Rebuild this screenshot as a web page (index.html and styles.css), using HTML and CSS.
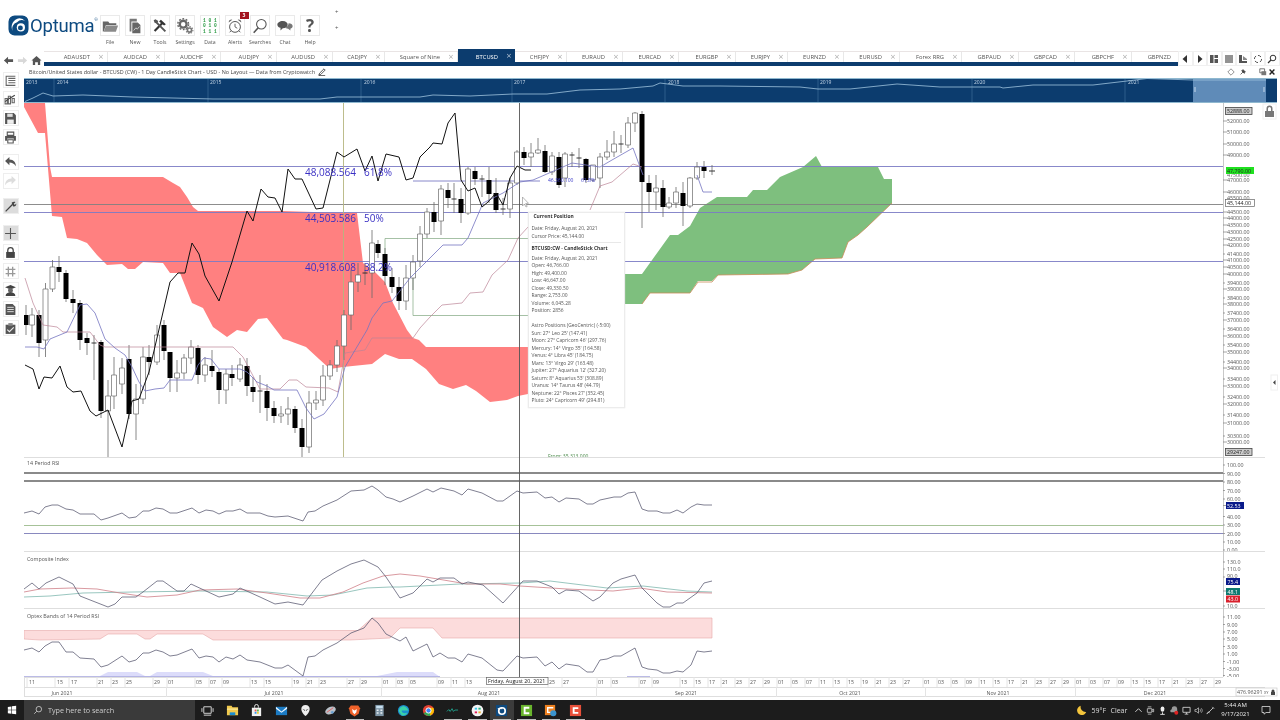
FILE: index.html
```html
<!DOCTYPE html>
<html lang="en">
<head>
<meta charset="utf-8">
<title>Optuma</title>
<link rel="stylesheet" href="styles.css">
</head>
<body>
<div class="app">
  <header class="toolbar">
    <div class="logo">
      <svg class="logo-mark" viewBox="0 0 22 22"><path d="M7 0.500h8a6.500 6.500 0 0 1 6.500 6.500v8a6.500 6.500 0 0 1-6.500 6.500h-8a6.500 6.500 0 0 1-6.500-6.500v-8a6.500 6.500 0 0 1 6.500-6.500z" fill="#0d4a80"/><path d="M5 17a9 9 0 0 1 7-13.500a8 8 0 0 1 6 3a7 7 0 0 0-8.500 1a7 7 0 0 0-4.500 9.500z" fill="#fff"/><circle cx="13.500" cy="13" r="4.300" fill="#fff"/><circle cx="13" cy="13.500" r="2.600" fill="#0d4a80"/></svg>
      <span class="logo-text">Optuma</span><span class="logo-r">®</span>
    </div>
    <div class="tools">
      <div class="tool"><div class="tool-box"><svg viewBox="0 0 20 20"><path d="M2 5h6l1.500 2H17v2H5.500L3 16H2z" fill="#666"/><path d="M5.500 9.500H19l-2.500 7H3z" fill="#8a8a8a"/></svg></div><span>File</span></div>
      <div class="tool"><div class="tool-box"><svg viewBox="0 0 20 20"><path d="M4 2h8v3H6v11H4z" fill="#777"/><path d="M7 6h6l3 3v9H7z" fill="#666"/><path d="M8.500 15l2.500-3 1.500 1.500 2.500-3" fill="none" stroke="#ddd" stroke-width=".9"/></svg></div><span>New</span></div>
      <div class="tool"><div class="tool-box"><svg viewBox="0 0 20 20"><path d="M4 15.500l9-9" stroke="#333" stroke-width="2.400"/><path d="M11 3l5.500 5-2 1.500L9 5z" fill="#333"/><path d="M16 16L6.500 6.500" stroke="#555" stroke-width="2.200"/><path d="M3 3.500l2-1 3 2-1 3-3-1z" fill="#555"/></svg></div><span>Tools</span></div>
      <div class="tool"><div class="tool-box"><svg viewBox="0 0 20 20"><circle cx="8" cy="8" r="3.800" fill="none" stroke="#666" stroke-width="2.600"/><circle cx="8" cy="8" r="6" fill="none" stroke="#666" stroke-width="1.600" stroke-dasharray="2 1.800"/><circle cx="15" cy="14.500" r="2.300" fill="none" stroke="#777" stroke-width="1.800"/><circle cx="15" cy="14.500" r="3.800" fill="none" stroke="#777" stroke-width="1.200" stroke-dasharray="1.500 1.400"/></svg></div><span>Settings</span></div>
      <div class="tool"><div class="tool-box tool-data"><span>1 0 1</span><span>0 1 0</span><span>1 1 1</span></div><span>Data</span></div>
      <div class="tool tool-alert"><div class="tool-box"><svg viewBox="0 0 20 20"><circle cx="10" cy="11" r="6" fill="none" stroke="#555" stroke-width="1.100"/><path d="M10 7.500V11l2.500 1.500M4 17l2-2M16 17l-2-2" fill="none" stroke="#555"/><path d="M3 6a3 3 0 0 1 4-3zM17 6a3 3 0 0 0-4-3z" fill="#666"/></svg></div><span>Alerts</span><b class="badge">3</b></div>
      <div class="tool"><div class="tool-box"><svg viewBox="0 0 20 20"><circle cx="11.500" cy="8" r="5.300" fill="none" stroke="#555" stroke-width="1.200"/><path d="M8 12L3 17.500" stroke="#555" stroke-width="1.800"/></svg></div><span>Searches</span></div>
      <div class="tool"><div class="tool-box"><svg viewBox="0 0 20 20"><path d="M7.500 4.500c3.500 0 5.500 2 5.500 4s-2 4-5.500 4L5 15v-3C3 11.500 1.500 10 1.500 8.500c0-2 2.500-4 6-4z" fill="#555"/><path d="M14 7c2.500 0 4.500 1.500 4.500 3S17.500 12.500 16 13v2l-2.500-2c-2 0-3-1-3-1 2-1 3.500-3 3.500-5z" fill="#777"/></svg></div><span>Chat</span></div>
      <div class="tool"><div class="tool-box tool-help">?</div><span>Help</span></div>
    </div>
    <div class="plus-col"><span>+</span><span>+</span></div>
  </header>

  <nav class="tabrow">
    <div class="nav-btns">
      <svg viewBox="0 0 12 12"><path d="M1 6l4.500-4v2.500H11v3H5.500V10z" fill="#555"/></svg>
      <svg viewBox="0 0 12 12"><path d="M11 6L6.500 2v2.500H1v3h5.500V10z" fill="#d8d8d8"/></svg>
      <svg viewBox="0 0 12 12"><path d="M6 1l5.500 5H10v5H7.500V8h-3v3H2V6H.500z" fill="#555"/></svg>
    </div>
    <div class="tabs-wrap">
      <div class="tabs">
        <div class="tab">ADAUSDT<i>×</i></div>
        <div class="tab">AUDCAD<i>×</i></div>
        <div class="tab">AUDCHF<i>×</i></div>
        <div class="tab">AUDJPY<i>×</i></div>
        <div class="tab">AUDUSD<i>×</i></div>
        <div class="tab">CADJPY<i>×</i></div>
        <div class="tab">Square of Nine<i>×</i></div>
        <div class="tab tab-on">BTCUSD<i>×</i></div>
        <div class="tab">CHFJPY<i>×</i></div>
        <div class="tab">EURAUD<i>×</i></div>
        <div class="tab">EURCAD<i>×</i></div>
        <div class="tab">EURGBP<i>×</i></div>
        <div class="tab">EURJPY<i>×</i></div>
        <div class="tab">EURNZD<i>×</i></div>
        <div class="tab">EURUSD<i>×</i></div>
        <div class="tab">Forex RRG<i>×</i></div>
        <div class="tab">GBPAUD<i>×</i></div>
        <div class="tab">GBPCAD<i>×</i></div>
        <div class="tab">GBPCHF<i>×</i></div>
        <div class="tab tab-last">GBPNZD</div>
      </div>
      <div class="tab-strip"></div>
    </div>
    <div class="tab-tools">
      <div><svg viewBox="0 0 10 10"><path d="M7 1L2.500 5 7 9z" fill="#333"/></svg></div>
      <div><svg viewBox="0 0 10 10"><path d="M3 1l4.500 4L3 9z" fill="#333"/></svg></div>
      <div><svg viewBox="0 0 10 10"><path d="M1 1h3.500v8H1zM5.500 1H9v3H5.500zM5.500 5H9v4H5.500z" fill="#555"/></svg></div>
      <div><svg viewBox="0 0 10 10"><path d="M1 2h8M1 4h8M1 6h8M1 8h8M2 1v8M4 1v8M6 1v8M8 1v8" stroke="#555" stroke-width=".8"/></svg></div>
      <div><svg viewBox="0 0 10 10"><path d="M1 1h3v6h5v2H1z" fill="#555"/><path d="M5 2l4 3v1H5z" fill="#888"/></svg></div>
      <div><svg viewBox="0 0 10 10"><circle cx="5" cy="5" r="3.600" fill="none" stroke="#555" stroke-dasharray="3.500 2"/></svg></div>
      <div><svg viewBox="0 0 10 10"><circle cx="6" cy="4" r="2.800" fill="none" stroke="#333"/><path d="M4 6L1 9" stroke="#333" stroke-width="1.300"/></svg></div>
    </div>
  </nav>

  <div class="body-row">
    <aside class="rail">
      <div class="rail-btn"><svg viewBox="0 0 12 12"><path d="M1.500 2h9M4 4h6.500M4 6h6.500M4 8h6.500M1.500 10.500h9M2 2v8.500" stroke="#666" fill="none"/></svg></div>
      <div class="rail-btn"><svg viewBox="0 0 12 12"><path d="M1 10V5h2v5zM4 10V3h2v7zM7.500 9V5h2v4z" fill="none" stroke="#666"/><path d="M1 8l4-3 5-3" stroke="#444" fill="none"/></svg></div>
      <div class="rail-btn"><svg viewBox="0 0 12 12"><path d="M1 1h8l2 2v8H1z" fill="#555"/><path d="M3 1.500h5v3H3z" fill="#ddd"/><path d="M3 7h6v4H3z" fill="#eee"/></svg></div>
      <div class="rail-btn"><svg viewBox="0 0 12 12"><path d="M3 1h6v3H3z" fill="none" stroke="#555"/><path d="M1 4.500h10v4.500H9V7H3v2H1z" fill="#555"/><path d="M3.500 8h5v3h-5z" fill="none" stroke="#555"/></svg></div>
      <div class="rail-btn rail-gap"><svg viewBox="0 0 12 12"><path d="M1 4.500L5 1v2.200c4 0 6 2.800 6 6.300C9.500 7 7.500 6 5 6v2.500z" fill="#555"/></svg></div>
      <div class="rail-btn"><svg viewBox="0 0 12 12"><path d="M11 4.500L7 1v2.200C3 3.200 1 6 1 9.500 2.500 7 4.500 6 7 6v2.500z" fill="#ddd"/></svg></div>
      <div class="rail-btn rail-on rail-gap"><svg viewBox="0 0 12 12"><path d="M1.500 10.500L8 4" stroke="#444" stroke-width="1.200"/><path d="M7 2.500c1-.8 3-1 3.500-.5L9 3.500l1 1 1.300-1.200c.3 1.200-.5 3-2.800 2.700z" fill="#444"/></svg></div>
      <div class="rail-btn rail-on rail-gap2"><svg viewBox="0 0 12 12"><path d="M6 1v10M1 6h10" stroke="#555"/></svg></div>
      <div class="rail-btn"><svg viewBox="0 0 12 12"><path d="M3.500 5.500V4a2.500 2.500 0 0 1 5 0v1.500" fill="none" stroke="#444" stroke-width="1.200"/><path d="M2 5.500h8V11H2z" fill="#444"/></svg></div>
      <div class="rail-btn"><svg viewBox="0 0 12 12"><path d="M4 1.500v9M8 1.500v9M1.500 4h9M1.500 8h9" stroke="#999" stroke-width="1.200"/></svg></div>
      <div class="rail-btn"><svg viewBox="0 0 12 12"><path d="M1 3l5-2 5 2-5 2z" fill="#444"/><circle cx="6" cy="6" r="2.300" fill="#666"/><path d="M1.500 11c0-2.500 2-3.500 4.500-3.500s4.500 1 4.500 3.500z" fill="#444"/></svg></div>
      <div class="rail-btn"><svg viewBox="0 0 12 12"><path d="M1.500 1h6.500l2.500 2.500V11h-9z" fill="#555"/><path d="M3 4h6M3 6h6M3 8h6" stroke="#eee" stroke-width=".8"/></svg></div>
      <div class="rail-btn"><svg viewBox="0 0 12 12"><path d="M1.500 2.500h9V11h-9z" fill="#555"/><path d="M4 1h4v2.500H4z" fill="#888"/><path d="M3 7l2 2 4-4" stroke="#eee" fill="none"/></svg></div>
    </aside>

    <main class="workspace">
      <div class="title-row">
        <span>Bitcoin/United States dollar - BTCUSD (CW) - 1 Day CandleStick Chart - USD - No Layout — Data from Cryptowatch</span>
        <svg class="pencil" viewBox="0 0 10 10"><path d="M1 9l1-2.500L7.500 1l1.500 1.500L3.500 8zM1 9.500h8" fill="none" stroke="#333"/></svg>
        <div class="title-icons">
          <svg viewBox="0 0 10 10"><path d="M5 1l4 4-4 4-4-4z" fill="none" stroke="#777"/></svg>
          <svg viewBox="0 0 10 10"><path d="M2 8l3-3M3 3l4 4M5 2l3 3-2 1-2-2z" stroke="#444" fill="#444"/></svg>
          <span class="gap"></span>
          <svg viewBox="0 0 10 10"><path d="M1 1h6v5H1z" fill="none" stroke="#555"/><path d="M3 4h6v5H3z" fill="#777"/></svg>
          <svg viewBox="0 0 10 10"><path d="M2 2l6 6M8 2L2 8" stroke="#222" stroke-width="1.800"/></svg>
        </div>
      </div>

      <svg class="overview" viewBox="24 78 1256 25">
        <rect x="24" y="78" width="1253" height="25" fill="#0c3c6e"/>
        <rect x="1193" y="79" width="73" height="24" fill="#5f8bb8"/>
        <path d="M54 78v25M208 78v25M361 78v25M512 78v25M665 78v25M818 78v25M972 78v25M1125 78v25" stroke="#3e6a98" stroke-width=".7"/>
        <path d="M24 78.500H1277M24 102.500H1277" stroke="#8fb8cf" stroke-width="1"/>
        <g class="yr"><text x="26" y="84">2013</text><text x="57" y="84">2014</text><text x="210" y="84">2015</text><text x="364" y="84">2016</text><text x="514" y="84">2017</text><text x="668" y="84">2018</text><text x="820" y="84">2019</text><text x="974" y="84">2020</text><text x="1128" y="84">2021</text></g>
        <polyline class="ovl" points="25,101.500 33,98 43,93 53,96 83,95 133,97 213,99 300,99 320,99 337,97 357,97 420,97 433,95 470,96 513,94 547,94 580,90 620,89 653,86 660,83 683,86 720,86 800,87 818,89 850,89 897,84 940,87 1000,87 1003,88 1033,85 1093,85 1127,81 1147,78.500 1193,80 1266,80"/>
        <path d="M1195 87v5M1264 87v5" stroke="#a5c0da" stroke-width="1.500"/>
      </svg>

      <section class="pane pane-main">
        <svg viewBox="24 103 1256 354">
          <path class="cloud-red" d="M24 103H45L50 167L52 177H163L173 183L180 187L187 197L193 207L198 211H283L343 213H357L363 263L373 270L385 282L393 303L407 330L413 338L419 340L426 347H528V394L518 396L507 400L490 402L476 391L466 385L453 389L439 384L426 369L412 359H399L385 354L372 364L343 367L330 369L319 359L306 347L287 340L283 339L267 318L258 319L247 332L237 330L227 337L213 327L203 308L192 303L180 273L170 273L163 263L143 262L135 269H128L122 264L107 265L97 255L87 243L77 239L67 238L62 217L52 216L45 133H38L24 107Z"/>
          <path class="cloud-green" d="M625 274H642L670 235H678L690 226L700 208L717 197H747L753 190H767L780 177L803 167L816 156L822 167H878L884 179H892V203L867 227L858 235L848 242L842 258L815 259L802 270L788 274L718 275L712 281H698L690 293H650L642 304H625Z"/>
          <path class="cloud-edge" d="M642 304L650 293H690L698 282H712L718 275L788 274L802 270L815 259L842 258L848 242L858 235L867 227L892 203"/>

          <path class="fib" d="M24 166.500H1224M24 212.500H1224M24 261.500H1224M413 181H540"/>
          <path class="level" d="M24 204.500H1224"/>
          <path class="grn" d="M385 254V238.500H528M413 278V315.500H528"/>
          <path class="vline-o" d="M343.500 103V457"/>

          <path class="wick" d="M26 305V335M32 308V337M39 310V357M45.500 283V357M52.500 260V292M59 256V282M66 270V302M73 290V313M80 300V350M87 333V355M94 335V380M101 340V418M108 380V457M114 357V409M122 358V394M129 345V419M136 384V440M143 347V404M149 345V375M157 325V365M164 320V360M170 352V392M177 360V392M184 354V379M191 340V364M198 345V384M205 357V382M212 350V377M219 369V404M226 369V404M232 365V386M240 358V382M247 358V396M253 377V402M260 375V413M267 384V421M274 401V423M281 406V423M288 397V425M295 406V433M302 419V457M309 391V453M316 391V410M323 365V406M330 360V380M337 340V372M344 310V360M351 270V330M358 263V292M365 263V285M372 230V298M378 240V258M385 248V285M392 268V293M399 277V310M406 265V310M413 255V290M420 226V267M427 208V238M434 202V232M441 185V235M448 183V208M454 183V213M461 188V223M468 167V215M475 167V185M482 175V197M489 167V203M496 178V213M503 198V215M510 178V218M517 150V185M524 147V165M531 143V167M538 138V154M545 145V173M552 152V175M559 152V188M565 152V187M572 152V167M579 148V168M586 158V183M593 165V182M600 153V188M607 140V160M614 131V157M621 135V153M628 117V148M635 112V132M642 111V228M649 175V212M656 175V210M663 180V217M669 197V209M676 187V208M683 182V226M690 177V208M697 162V180M704 161V178M712 165V175"/>
          <path class="body-w" d="M29.500 315h5V325h-5zM43 289h5V340h-5zM50 267h5V289h-5zM105.500 396h5V411h-5zM111.500 375h5V396h-5zM119.500 368h5V384h-5zM133.500 399h5V414h-5zM140.500 357h5V399h-5zM154.500 335h5V362h-5zM174.500 373h5V378h-5zM181.500 358h5V373h-5zM188.500 347h5V358h-5zM202.500 365h5V375h-5zM223.500 374h5V390h-5zM237.500 365h5V379h-5zM278.500 414h5V416h-5zM285.500 409h5V414h-5zM306.500 403h5V447h-5zM313.500 400h5V403h-5zM320.500 376h5V400h-5zM327.500 365h5V376h-5zM334.500 346h5V365h-5zM341.500 315h5V346h-5zM348.500 282h5V315h-5zM355.500 275h5V282h-5zM369.500 243h5V273h-5zM403.500 278h5V301h-5zM410.500 262h5V278h-5zM417.500 234h5V261h-5zM424.500 212h5V234h-5zM438.500 189h5V221h-5zM465.500 169h5V213h-5zM507.500 183h5V209h-5zM514.500 152h5V183h-5zM528.500 153h5V157h-5zM535.500 150h5V153h-5zM549.500 156h5V172h-5zM562.500 154h5V178h-5zM590.500 165h5V180h-5zM597.500 157h5V178h-5zM604.500 152h5V157h-5zM611.500 144h5V152h-5zM625.500 123h5V145h-5zM632.500 113h5V123h-5zM653.500 188h5V192h-5zM666.500 203h5V207h-5zM673.500 192h5V203h-5zM687.500 178h5V206h-5zM694.500 167h5V178h-5z"/>
          <path class="body-b" d="M24 315h4.500V325H24zM36.500 315h5V343h-5zM56.500 267h5V272h-5zM63.500 273h5V299h-5zM70.500 299h5V303h-5zM77.500 303h5V340h-5zM84.500 338h5V343h-5zM98.500 342h5V411h-5zM126.500 359h5V414h-5zM146.500 357h5V362h-5zM161.500 325h5V351h-5zM167.500 352h5V378h-5zM195.500 348h5V375h-5zM209.500 366h5V371h-5zM216.500 372h5V390h-5zM229.500 374h5V378h-5zM244.500 366h5V386h-5zM250.500 387h5V392h-5zM264.500 391h5V408h-5zM271.500 408h5V416h-5zM292.500 409h5V428h-5zM299.500 428h5V447h-5zM375.500 244h5V253h-5zM382.500 254h5V276h-5zM389.500 277h5V287h-5zM396.500 287h5V301h-5zM431.500 212h5V222h-5zM445.500 190h5V198h-5zM458.500 199h5V213h-5zM472.500 171h5V179h-5zM486.500 180h5V194h-5zM493.500 193h5V210h-5zM521.500 152h5V158h-5zM542.500 151h5V172h-5zM556.500 157h5V185h-5zM583.500 159h5V180h-5zM639.500 114h5V182h-5zM646.500 183h5V192h-5zM660.500 188h5V207h-5zM680.500 193h5V206h-5zM701.500 167h5V171h-5z"/>
          <path class="doji" d="M91.500 343h5M257.500 391h5M362.500 273h5M451.500 199h5M479.500 179h5M500.500 209h5M569.500 155h5M576.500 158h5M618.500 144h5M709 171h6"/>

          <polyline class="tenkan" points="25,278 33,303 43,325 57,327 63,332 90,332 100,345 105,347 233,347 243,357 260,389 280,389 289,380 297,380 306,387 329,388 338,392 345,353 365,350 372,338 413,338 420,328 430,317 442,305 462,303 470,293 483,292 492,275 508,260 518,238 528,227"/>
          <polyline class="tenkan" points="590,210 600,186 612,182 633,164 642,167"/>
          <polyline class="kijun" points="25,347 37,347 44,349 50,339 67,332 80,305 87,304 95,313 105,339 115,348 125,355 132,367 139,382 145,391 155,389 164,388 170,380 192,380 198,365 204,358 211,359 219,369 240,369 247,372 257,382 267,386 274,390 297,390 306,408 314,419 324,414 337,397 345,367 367,330 372,318 383,303 392,301 410,278 430,258 443,245 462,245 468,238 483,203 503,193 520,182 533,180 540,177 572,163 600,167 612,160 633,148 643,175"/>
          <polyline class="kijun" points="697,175 703,192 712,192"/>
          <polyline class="chikou" points="25,365 33,369 39,389 44,377 52,378 60,366 67,387 73,392 81,391 90,411 96,416 108,410 122,447 132,401 139,399 149,372 157,338 170,282 178,273 185,273 192,243 199,254 205,276 219,301 232,262 247,211 253,221 261,189 268,197 275,198 282,212 288,169 295,179 302,179 316,209 323,208 330,180 337,152 344,157 357,149 365,171 372,156 378,181 386,154 399,157 406,180 413,178 420,157 430,147 433,143 442,144 448,123 455,113 461,180 468,191 475,188 482,207 488,202 496,193 503,205 510,178 517,166 525,170 531,170"/>

          <path class="vline" d="M519.500 103V457"/>

          <g class="fibtxt">
            <text x="305" y="176">48,088.564</text><text x="364" y="176">61.8%</text>
            <text x="305" y="221.500">44,503.586</text><text x="364" y="221.500">50%</text>
            <text x="305" y="270.500">40,918.608</text><text x="364" y="270.500">38.2%</text>
          </g>
          <g class="fibsm"><text x="548" y="182">46,360.100</text><text x="581" y="182">61.8%</text></g>
          <text class="fromtxt" x="548" y="458">From: 35,313.000</text>
          <path class="cursor" d="M522.500 197v9l2-2 1.500 3 1.200-.6-1.500-2.900 2.800-.2z"/>

          <path class="axis" d="M1223.500 103V457"/>
          <path class="tick" d="M1223 121h4M1223 132h4M1223 144h4M1223 155h4M1223 180h4M1223 192h4M1223 212h4M1223 218h4M1223 225h4M1223 232h4M1223 239h4M1223 245h4M1223 254h2M1223 260h4M1223 267h4M1223 274h4M1223 283h2M1223 289h4M1223 298h2M1223 304h4M1223 313h2M1223 320h4M1223 329h2M1223 336h4M1223 345h2M1223 352h4M1223 362h2M1223 368h4M1223 379h2M1223 386h4M1223 397h2M1223 404h4M1223 415h2M1223 423h4M1223 436h2M1223 442h4"/>
          <g class="ax">
            <text x="1227" y="123">52000.00</text><text x="1227" y="134">51000.00</text><text x="1227" y="146">50000.00</text><text x="1227" y="157">49000.00</text><text x="1227" y="177">47500.00</text><text x="1227" y="182">47000.00</text><text x="1227" y="194">46000.00</text><text x="1227" y="200">45500.00</text><text x="1227" y="214">44500.00</text><text x="1227" y="220">44000.00</text><text x="1227" y="227">43500.00</text><text x="1227" y="234">43000.00</text><text x="1227" y="241">42500.00</text><text x="1227" y="247">42000.00</text><text x="1227" y="256">41400.00</text><text x="1227" y="262">41000.00</text><text x="1227" y="269">40500.00</text><text x="1227" y="276">40000.00</text><text x="1227" y="285">39400.00</text><text x="1227" y="291">39000.00</text><text x="1227" y="300">38400.00</text><text x="1227" y="306">38000.00</text><text x="1227" y="315">37400.00</text><text x="1227" y="322">37000.00</text><text x="1227" y="331">36400.00</text><text x="1227" y="338">36000.00</text><text x="1227" y="347">35400.00</text><text x="1227" y="354">35000.00</text><text x="1227" y="364">34400.00</text><text x="1227" y="370">34000.00</text><text x="1227" y="381">33400.00</text><text x="1227" y="388">33000.00</text><text x="1227" y="399">32400.00</text><text x="1227" y="406">32000.00</text><text x="1227" y="417">31400.00</text><text x="1227" y="425">31000.00</text><text x="1227" y="438">30300.00</text><text x="1227" y="444">30000.00</text>
          </g>
          <rect class="tag-grey" x="1225.500" y="107.500" width="26.500" height="7"/><text class="ax tag-t" x="1227" y="113">52888.00</text>
          <rect class="tag-green" x="1226" y="167" width="28" height="7"/><text class="ax tag-t" x="1227" y="172.500">47,790.00</text>
          <rect class="tag-white" x="1225.500" y="199.500" width="29" height="7"/><text class="ax tag-t" x="1227" y="205">45,144.00</text>
          <rect class="tag-grey" x="1225.500" y="448.500" width="26.500" height="7"/><text class="ax tag-t" x="1227" y="454">29247.00</text>

          <rect class="lock-box" x="1263" y="104" width="13" height="15"/>
          <path class="lock" d="M1266.500 111v-2.500a3 3 0 0 1 6 0V111h1.500v6h-9v-6zM1268 111h3v-2.500a1.500 1.500 0 0 0-3 0z"/>
          <rect class="lock-box" x="1271" y="375" width="6.500" height="15"/>
          <path d="M1275.500 380l-2.500 2.500 2.500 2.500z" fill="#444"/>
        </svg>

        <div class="popup">
          <p class="pop-h pop-in">Current Position</p>
          <p class="pop-gap">Date: Friday, August 20, 2021</p>
          <p>Cursor Price: 45,144.00</p>
          <hr>
          <p class="pop-h">BTCUSD:CW - CandleStick Chart</p>
          <p class="pop-gap">Date: Friday, August 20, 2021</p>
          <p>Open: 46,766.00</p>
          <p>High: 49,400.00</p>
          <p>Low: 46,647.00</p>
          <p>Close: 49,330.50</p>
          <p>Range: 2,753.00</p>
          <p>Volume: 6,045.28</p>
          <p>Position: 2856</p>
          <p class="pop-gap2">Astro Positions (GeoCentric) (-5:00)</p>
          <p>Sun: 27° Leo 25' (147.41)</p>
          <p>Moon: 27° Capricorn 46' (297.76)</p>
          <p>Mercury: 14° Virgo 35' (164.58)</p>
          <p>Venus: 4° Libra 45' (184.75)</p>
          <p>Mars: 13° Virgo 29' (163.48)</p>
          <p>Jupiter: 27° Aquarius 12' (327.20)</p>
          <p>Saturn: 8° Aquarius 53' (308.89)</p>
          <p>Uranus: 14° Taurus 48' (44.79)</p>
          <p>Neptune: 22° Pisces 27' (352.45)</p>
          <p>Pluto: 24° Capricorn 49' (294.81)</p>
        </div>
      </section>

      <section class="pane pane-rsi">
        <svg viewBox="24 457 1256 94">
          <path class="sep" d="M24 457.500H1265"/>
          <text class="plabel" x="27" y="465">14 Period RSI</text>
          <path class="ob" d="M24 473H1223M24 481H1223"/>
          <path class="l-green" d="M24 525.500H1223"/>
          <path class="l-blue" d="M24 533.500H1223"/>
          <polyline class="osc" points="24,513 32,511 39,514 45,507 52,505 58,505 66,509 73,510 80,514 94,514 101,520 108,518 122,513 129,518 136,517 143,511 149,511 156,508 163,509 170,513 177,513 192,508 199,513 206,510 213,511 219,514 226,511 233,511 240,509 247,513 260,513 268,516 275,517 288,516 303,521 308,512 315,511 323,506 330,503 337,500 351,491 364,490 372,486 378,490 386,497 393,499 400,502 413,496 427,489 433,492 441,488 454,491 462,495 468,489 482,493 497,501 503,501 517,491 523,493 537,492 545,498 552,497 559,502 566,498 579,499 587,504 593,504 600,500 614,497 621,497 628,493 635,492 642,509 648,511 657,511 663,513 670,513 677,510 683,513 691,507 697,504 704,505 712,505"/>
          <path class="vline" d="M519.500 457V551"/>
          <path class="axis" d="M1223.500 457V551"/>
          <path class="tick" d="M1223 465h2M1223 473.500h2M1223 482h2M1223 490.500h2M1223 499h2M1223 505.500h3M1223 516.500h2M1223 525h2M1223 533.500h2M1223 542h2M1223 550h2"/>
          <g class="ax">
            <text x="1227" y="467">100.00</text><text x="1227" y="475.500">90.00</text><text x="1227" y="484">80.00</text><text x="1227" y="492.500">70.00</text><text x="1227" y="501">60.00</text><text x="1227" y="518.500">40.00</text><text x="1227" y="527">30.00</text><text x="1227" y="535.500">20.00</text><text x="1227" y="544">10.00</text><text x="1227" y="552">0.00</text>
          </g>
          <rect class="tag-navy" x="1226" y="502" width="18" height="7"/><text class="ax tag-w" x="1227" y="507.500">52.53</text>
        </svg>
      </section>

      <section class="pane pane-comp">
        <svg viewBox="24 551 1256 57">
          <path class="sep" d="M24 551.500H1265"/>
          <text class="plabel" x="27" y="560.500">Composite Index</text>
          <polyline class="c-teal" points="24,597 50,596 83,593 133,592 200,591 267,592 307,596 333,595 367,588 390,587 400,587 460,584 520,583 550,581 607,588 643,586 687,591 712,592"/>
          <polyline class="c-red" points="24,592 40,589 72,588 97,589 120,593 147,597 177,595 200,590 237,589 267,593 300,598 320,598 343,592 363,583 383,576 400,574 420,576 467,584 500,584 520,586 567,589 613,591 640,588 667,592 712,593"/>
          <polyline class="osc" points="24,589 32,583 39,589 46,583 59,577 73,584 80,596 108,607 115,604 122,597 136,597 143,592 157,581 163,581 177,591 184,591 191,584 206,591 219,597 233,594 240,588 260,597 275,604 288,602 303,605 322,580 337,571 351,564 364,560 378,567 386,577 400,598 413,593 427,579 433,582 440,578 454,578 462,584 468,582 483,585 503,603 523,581 537,581 552,587 559,594 566,590 579,591 593,601 600,597 613,583 621,579 635,575 642,588 657,603 663,607 670,607 677,603 683,603 697,593 704,583 712,581"/>
          <path class="vline" d="M519.500 551V608"/>
          <path class="axis" d="M1223.500 551V608"/>
          <path class="tick" d="M1223 562h2M1223 569h2M1223 577h2M1223 591h3M1223 606h2"/>
          <g class="ax"><text x="1227" y="564">130.0</text><text x="1227" y="571">110.0</text><text x="1227" y="578">90.0</text><text x="1227" y="608">10.0</text></g>
          <rect class="tag-navy" x="1226" y="578" width="14" height="7"/><text class="ax tag-w" x="1227.500" y="583.500">75.4</text>
          <rect class="tag-teal" x="1226" y="588" width="14" height="7"/><text class="ax tag-w" x="1227.500" y="593.500">48.1</text>
          <rect class="tag-red" x="1226" y="595.500" width="14" height="7"/><text class="ax tag-w" x="1227.500" y="601">43.0</text>
        </svg>
      </section>

      <section class="pane pane-optex">
        <svg viewBox="24 608 1256 69">
          <path class="sep" d="M24 608.500H1265"/>
          <text class="plabel" x="27" y="617.500">Optex Bands of 14 Period RSI</text>
          <path class="band-red" d="M24 630.500H358L372 618H712V638H442L433 628H400L390 638L350 640H213L203 634H157L150 639H145L137 634H108L100 639L40 640L24 639Z"/>
          <path class="band-blue" d="M100 676L108 672H137L145 676H150L157 672H203L213 676H377L397 672H433L440 677H100Z"/>
          <path class="band-line" d="M24 676.500H440M627 676.500H650"/>
          <polyline class="osc" points="24,650 32,648 39,652 45,646 52,642 59,642 66,652 73,652 80,658 94,659 101,667 108,665 122,656 129,662 136,660 143,653 149,653 156,650 163,652 170,656 177,655 192,649 199,658 206,656 213,657 219,662 226,657 233,659 240,655 247,660 260,662 275,668 282,668 288,665 303,676 308,657 315,656 323,650 337,643 351,633 364,628 372,618 378,623 386,634 400,641 406,637 413,651 427,644 433,657 440,653 448,658 455,658 462,662 468,654 482,658 497,670 503,671 517,656 523,658 537,657 545,666 552,662 559,669 566,664 579,666 587,672 593,672 600,660 607,659 614,656 621,656 635,648 642,667 648,669 657,670 663,673 670,673 677,671 683,672 691,665 697,651 704,652 712,651"/>
          <path class="vline" d="M519.500 608V677"/>
          <path class="axis" d="M1223.500 608V677"/>
          <path class="tick" d="M1223 617h2M1223 624.500h2M1223 632h2M1223 639h2M1223 646.500h2M1223 654h2M1223 661.500h2M1223 668.500h2M1223 675.500h2"/>
          <g class="ax"><text x="1227" y="619">11.00</text><text x="1227" y="626.500">9.00</text><text x="1227" y="634">7.00</text><text x="1227" y="641">5.00</text><text x="1227" y="648.500">3.00</text><text x="1227" y="656">1.00</text><text x="1227" y="663.500">-1.00</text><text x="1227" y="670.500">-3.00</text><text x="1227" y="677.500">-5.00</text></g>
        </svg>
      </section>

      <section class="pane pane-dates">
        <svg viewBox="24 677 1256 20">
          <path class="sep" d="M24 677.500H1223M24 687.500H1265M24 696.500H1265M24.500 677V697"/>
          <path class="dtick" d="M27 677v10M55 677v10M69 677v10M97 677v10M111 677v10M125 677v10M153 677v10M167 677v10M195 677v10M209 677v10M222 677v10M250 677v10M264 677v10M292 677v10M306 677v10M319 677v10M347 677v10M360 677v10M382 677v10M396 677v10M409 677v10M437 677v10M451 677v10M465 677v10M548 677v10M562 677v10M597 677v10M611 677v10M639 677v10M652 677v10M680 677v10M694 677v10M708 677v10M721 677v10M735 677v10M749 677v10M763 677v10M777 677v10M791 677v10M805 677v10M819 677v10M833 677v10M847 677v10M861 677v10M875 677v10M889 677v10M903 677v10M923 677v10M937 677v10M951 677v10M965 677v10M979 677v10M993 677v10M1007 677v10M1021 677v10M1035 677v10M1049 677v10M1062 677v10M1075 677v10M1089 677v10M1103 677v10M1117 677v10M1131 677v10M1144 677v10M1158 677v10M1172 677v10M1186 677v10M1200 677v10M1214 677v10"/>
          <path class="dtick" d="M166.500 687v10M381.500 687v10M596.500 687v10M776.500 687v10M925.500 687v10M1075.500 687v10"/>
          <g class="dax">
            <text x="32" y="684">11</text><text x="60" y="684">15</text><text x="74" y="684">17</text><text x="101" y="684">21</text><text x="115" y="684">23</text><text x="129" y="684">25</text><text x="157" y="684">29</text><text x="171" y="684">01</text><text x="199" y="684">05</text><text x="213" y="684">07</text><text x="226" y="684">09</text><text x="254" y="684">13</text><text x="268" y="684">15</text><text x="296" y="684">19</text><text x="310" y="684">21</text><text x="323" y="684">23</text><text x="351" y="684">27</text><text x="364" y="684">29</text><text x="386" y="684">01</text><text x="400" y="684">03</text><text x="413" y="684">05</text><text x="441" y="684">09</text><text x="455" y="684">11</text><text x="469" y="684">13</text><text x="552" y="684">25</text><text x="566" y="684">27</text><text x="601" y="684">01</text><text x="615" y="684">03</text><text x="643" y="684">07</text><text x="656" y="684">09</text><text x="684" y="684">13</text><text x="698" y="684">15</text><text x="712" y="684">17</text><text x="725" y="684">21</text><text x="739" y="684">23</text><text x="753" y="684">27</text><text x="767" y="684">29</text><text x="781" y="684">01</text><text x="795" y="684">05</text><text x="809" y="684">07</text><text x="823" y="684">11</text><text x="837" y="684">13</text><text x="851" y="684">15</text><text x="865" y="684">19</text><text x="879" y="684">21</text><text x="893" y="684">23</text><text x="907" y="684">27</text><text x="927" y="684">01</text><text x="941" y="684">03</text><text x="955" y="684">05</text><text x="969" y="684">09</text><text x="983" y="684">11</text><text x="997" y="684">15</text><text x="1011" y="684">17</text><text x="1025" y="684">21</text><text x="1039" y="684">23</text><text x="1053" y="684">27</text><text x="1066" y="684">29</text><text x="1079" y="684">01</text><text x="1093" y="684">03</text><text x="1107" y="684">07</text><text x="1121" y="684">09</text><text x="1135" y="684">13</text><text x="1148" y="684">15</text><text x="1162" y="684">17</text><text x="1176" y="684">21</text><text x="1190" y="684">23</text><text x="1204" y="684">27</text><text x="1218" y="684">29</text>
          </g>
          <g class="dax mon"><text x="62" y="694.500">Jun 2021</text><text x="274" y="694.500">Jul 2021</text><text x="489" y="694.500">Aug 2021</text><text x="686" y="694.500">Sep 2021</text><text x="850" y="694.500">Oct 2021</text><text x="998" y="694.500">Nov 2021</text><text x="1155" y="694.500">Dec 2021</text></g>
          <rect class="tag-white" x="486.500" y="677.500" width="61.500" height="7"/>
          <text class="ax tag-t" x="488" y="683">Friday, August 20, 2021</text>
          <rect class="tag-white lite" x="1236" y="688" width="41" height="8"/>
          <text class="ax" x="1237" y="694">476.96291</text>
          <text class="ax xy" x="1264" y="694">XY</text>
          <path d="M1271.500 692v-1a1.500 1.500 0 0 1 3 0v1h.5v3h-4v-3z" fill="#444"/>
        </svg>
      </section>
    </main>
  </div>

  <footer class="taskbar">
    <div class="start"><svg viewBox="0 0 12 12"><path d="M1 2.300l4.300-.6v4H1zM6 1.600l5-.7v4.800H6zM1 6.400h4.300v4L1 9.800zM6 6.400h5v4.800l-5-.7z" fill="#fff"/></svg></div>
    <div class="search"><svg viewBox="0 0 12 12"><circle cx="7" cy="5" r="3.300" fill="none" stroke="#ccc"/><path d="M4.500 7.500L1.500 10.500" stroke="#ccc"/></svg><span>Type here to search</span></div>
    <div class="apps">
      <div class="app-i"><svg viewBox="0 0 14 14"><path d="M3 3h8v7H3zM1 4.500v4M13 4.500v4M3 12h8" fill="none" stroke="#ddd"/></svg></div>
      <div class="app-i"><svg viewBox="0 0 14 14"><path d="M1 2h5l1 1.500h6V12H1z" fill="#f2c94c"/><path d="M1 5h12v1H1z" fill="#fff2b0"/><path d="M4 9h6v3H4z" fill="#1d8ecf"/></svg></div>
      <div class="app-i"><svg viewBox="0 0 14 14"><path d="M2 4h10v9H2z" fill="#f0f0f0"/><path d="M5 4V2.500a2 2 0 0 1 4 0V4" fill="none" stroke="#f0f0f0"/><path d="M5 6h2v2H5z" fill="#e55"/><path d="M7.500 6h2v2h-2z" fill="#5b5"/><path d="M5 8.500h2v2H5z" fill="#39e"/><path d="M7.500 8.500h2v2h-2z" fill="#ec3"/></svg></div>
      <div class="app-i"><svg viewBox="0 0 14 14"><path d="M1 3h12v9H1z" fill="#1b7bc4"/><path d="M1 3l6 5 6-5v2L7 9.500 1 5z" fill="#e8f4ff"/></svg></div>
      <div class="app-i"><svg viewBox="0 0 14 14"><path d="M7 1c3 0 4.500 2 4.500 4.500S9 12 7 13C5 12 2.500 8 2.500 5.500S4 1 7 1z" fill="#eee"/><path d="M3.500 5l3 1.500v1zM10.500 5l-3 1.500v1z" fill="#222"/></svg></div>
      <div class="app-i"><svg viewBox="0 0 14 14"><ellipse cx="7" cy="7" rx="6" ry="3.800" transform="rotate(-25 7 7)" fill="#b8c0c8"/><path d="M3 9l7-5" stroke="#e06060"/><circle cx="9" cy="9" r="1.500" fill="#6aa0d0"/></svg></div>
      <div class="app-i app-run"><svg viewBox="0 0 14 14"><path d="M3 1.500h8l2 3-1.500 6L7 13.500 2.500 10.500 1 4.500z" fill="#f0622a"/><path d="M4.500 5.500L7 7l2.500-1.500L9 9l-2 2-2-2z" fill="#fff"/></svg></div>
      <div class="app-i"><svg viewBox="0 0 14 14"><path d="M2.500 1h9v12h-9z" fill="#7e95a6"/><path d="M3.500 2h7v2.500h-7z" fill="#c8e0f0"/><path d="M4 6h2v1.500H4zM8 6h2v1.500H8zM4 9h2v1.500H4zM8 9h2v1.500H8z" fill="#e8eef2"/></svg></div>
      <div class="app-i"><svg viewBox="0 0 14 14"><circle cx="7" cy="7" r="6" fill="#1c8dd0"/><path d="M2 8c0-4 3-5.500 5-5.500S12 5 12 7H5c0 3 3 3.500 6 2.500-1 2.500-4 3.500-6 2.500" fill="#3ad1a8"/></svg></div>
      <div class="app-i"><svg viewBox="0 0 14 14"><circle cx="7" cy="7" r="6" fill="#e34133"/><path d="M7 7L1.800 10A6 6 0 0 0 7 13c1.500 0 2.800-.5 3-1z" fill="#34a853"/><path d="M7 4h5.200A6 6 0 0 1 9 12.500z" fill="#fbbc05"/><circle cx="7" cy="7" r="2.800" fill="#4285f4" stroke="#fff"/></svg></div>
      <div class="app-i app-run"><svg viewBox="0 0 14 14"><path d="M1 8l2-2 1.500 2 2-3 1.500 3 1.500-1.500H13" fill="none" stroke="#1fa08a"/></svg></div>
      <div class="app-i app-run"><svg viewBox="0 0 14 14"><circle cx="7" cy="7" r="6.300" fill="#f4f4f4"/><path d="M4 4h2.500v2H4z" fill="#36c5f0"/><path d="M8 4h2.500v2H8z" fill="#2eb67d"/><path d="M4 8h2.500v2H4z" fill="#e01e5a"/><path d="M8 8h2.500v2H8z" fill="#ecb22e"/></svg></div>
      <div class="app-i app-run app-active"><svg viewBox="0 0 14 14"><path d="M1 1h12v12H1z" fill="#0d4a80"/><circle cx="7.500" cy="7.500" r="3.500" fill="none" stroke="#fff" stroke-width="1.800"/><path d="M3 5h5" stroke="#fff"/></svg></div>
      <div class="app-i app-run"><svg viewBox="0 0 14 14"><path d="M1 1h12v12H1z" fill="#69b52d"/><path d="M10 4H5v6h5" fill="none" stroke="#fff" stroke-width="2"/></svg></div>
      <div class="app-i app-run"><svg viewBox="0 0 14 14"><path d="M1 1h11v11H1z" fill="#ee8120"/><path d="M10 4H4v5h3" fill="none" stroke="#fff" stroke-width="1.500"/><circle cx="10" cy="10" r="3.300" fill="#3a94cf"/></svg></div>
      <div class="app-i app-run"><svg viewBox="0 0 14 14"><path d="M1 1h12v12H1z" fill="#e8503a"/><path d="M10 4.500H5v5h5" fill="none" stroke="#fff" stroke-width="2"/></svg></div>
    </div>
    <div class="tray">
      <svg class="moon" viewBox="0 0 14 14"><path d="M6 1a6 6 0 1 0 7 8A6.500 6.500 0 0 1 6 1z" fill="#f4c53c"/></svg>
      <span class="wx">59°F</span><span class="wx wx2">Clear</span>
      <svg class="tr" viewBox="0 0 10 10"><path d="M1.500 6.500L5 3l3.500 3.500" fill="none" stroke="#ddd"/></svg>
      <svg class="tr" viewBox="0 0 10 10"><path d="M1.500 3h5v4h-5zM6.500 4.500l2-1v3l-2-1M2 1h4M2 9h4" fill="none" stroke="#ccc" stroke-width=".9"/></svg>
      <svg class="tr" viewBox="0 0 10 10"><rect x="3" y="0.500" width="4" height="6" rx="2" fill="#eee"/><path d="M5 7v2" stroke="#eee"/><path d="M2.500 9.300h5" stroke="#eee"/></svg>
      <svg class="tr" viewBox="0 0 10 10"><path d="M1 7a2 2 0 0 1 1-3.500A3 3 0 0 1 8 3v4z" fill="#999"/><circle cx="7" cy="7.500" r="2.200" fill="#d22"/></svg>
      <svg class="tr" viewBox="0 0 10 10"><path d="M1 1.500h8V7H1zM5 7v2M3 9h4" fill="none" stroke="#ccc"/></svg>
      <svg class="tr" viewBox="0 0 10 10"><path d="M1 4h1.500L5 2v6L2.500 6H1zM6.500 3.500c1 1 1 2 0 3M8 2.500c1.500 1.500 1.500 3.500 0 5" fill="none" stroke="#ccc" stroke-width=".8"/></svg>
      <svg class="tr" viewBox="0 0 10 10"><path d="M1.500 8.500l6.500-6.500M1 9c1-3 2-2.500 3-1.500M7 1l2 2" fill="none" stroke="#ccc"/></svg>
      <div class="clock"><span>5:44 AM</span><span>9/17/2021</span></div>
      <svg class="tr note" viewBox="0 0 10 10"><path d="M1 1.500h8V7.500H5L3 9.200V7.500H1z" fill="none" stroke="#ddd" stroke-width=".8"/></svg>
    </div>
  </footer>
</div>
</body>
</html>
```
FILE: styles.css
```css
*{box-sizing:border-box;margin:0;padding:0}
html,body{width:1280px;height:720px;overflow:hidden;background:#fff}
body{font-family:"Open Sans","Noto Sans",sans-serif;color:#444}
.app{width:1280px;height:720px;display:flex;flex-direction:column;background:#fff;filter:blur(.45px)}

/* top toolbar */
.toolbar{height:50px;display:flex;flex:none;position:relative}
.logo{width:100px;flex:none;display:flex;align-items:center;padding:0 0 0 8px;height:50px}
.logo-mark{width:21px;height:21px;flex:none;margin-right:1px}
.logo-text{font:400 18.500px Roboto,sans-serif;color:#0d4a80;letter-spacing:-.2px;margin-top:1px}
.logo-r{font-size:4px;color:#0d4a80;align-self:flex-start;margin:17px 0 0 0}
.tools{display:flex;gap:5px;padding-top:15px}
.tool{width:20px;display:flex;flex-direction:column;align-items:center;font-size:5.200px;color:#555;position:relative;white-space:nowrap}
.tool-box{width:20px;height:21px;border:1px solid #eaeaea;display:flex;align-items:center;justify-content:center;margin-bottom:2px}
.tool-box svg{width:18px;height:18px}
.tool-data{flex-direction:column;font:700 4.600px/5px "Liberation Mono",monospace;color:#2b9a44;gap:.5px}
.tool-help{font:700 17px/19px "Open Sans",sans-serif;color:#555}
.badge{position:absolute;left:14.500px;top:-3px;width:9px;height:7px;background:#a3121e;color:#fff;font:700 5px/7px "Open Sans",sans-serif;text-align:center}
.plus-col{display:flex;flex-direction:column;gap:8px;padding:8px 0 0 15px;font-size:6px;color:#555}

/* tab row */
.tabrow{height:16px;display:flex;flex:none}
.nav-btns{width:44px;flex:none;display:flex;align-items:center;justify-content:space-around;padding:4px 1px 0 2px}
.nav-btns svg{width:11px;height:11px}
.tabs-wrap{width:1134px;flex:none;display:flex;flex-direction:column}
.tabs{height:11.500px;display:grid;grid-template-columns:64px 57px 56px 56px 56px 52px 73px 57px 52px 56px 56px 57px 52px 56px 56px 62px 57px 56px 57px 46px;border-top:1px solid #e9e4e4;margin-top:1px}
.tab{display:flex;align-items:center;justify-content:flex-end;font-size:5.800px;color:#555;padding-right:3px;position:relative;white-space:nowrap;border-right:1px solid #e8e8e8}
.tab i{font:400 7px/7px "DejaVu Sans",sans-serif;color:#aaa;width:6px;text-align:center;margin-left:8px}
.tab-on{background:#0c3c6e;color:#fff;margin-top:-3px;border:0;padding-top:2px}
.tab-on i{color:#b9c8d8}
.tab-last{padding-right:7px;border-right:0}
.tab-strip{height:4px;background:#0c3c6e}
.tab-tools{flex:1;display:flex;padding:1px 0 0 0}
.tab-tools div{width:14.500px;height:15px;border:1px solid #f0f0f0;display:flex;align-items:center;justify-content:center}
.tab-tools svg{width:10px;height:10px}

/* main */
.body-row{height:634px;flex:none;display:flex}
.rail{width:24px;flex:none;display:flex;flex-direction:column;align-items:center;gap:3px;padding:6px 3px 0 0}
.rail-btn{width:16px;height:16px;border:1px solid #eee;display:flex;align-items:center;justify-content:center}
.rail-btn svg{width:13px;height:13px}
.rail-on{background:#dcdcdc}
.rail-gap{margin-top:6px}
.rail-gap2{margin-top:8px}
.workspace{width:1256px;flex:none;display:flex;flex-direction:column}
.title-row{height:12px;flex:none;display:flex;align-items:center;font-size:5.450px;color:#444;padding-left:5px;white-space:nowrap;position:relative}
.pencil{width:8px;height:8px;margin-left:3px}
.title-icons{position:absolute;left:1203px;top:2px;display:flex;gap:1px;align-items:center}
.title-icons svg{width:8px;height:8px}
.title-icons svg:nth-child(2){margin-left:3px}
.title-icons .gap{width:10px}
.overview{width:1256px;height:25px;display:block;flex:none}
.yr text{font-size:5px;fill:#c8d8e8}
.ovl{fill:none;stroke:#9fc4de;stroke-width:.8}

.pane{position:relative;flex:none;width:1256px}
.pane svg{display:block;width:1256px;height:100%}
.pane-main{height:354px}
.pane-rsi{height:94px}
.pane-comp{height:57px}
.pane-optex{height:69px}
.pane-dates{height:20px}

.cloud-red{fill:#ff8080}
.cloud-green{fill:#7ebf7e}
.cloud-edge{fill:none;stroke:#c98a55;stroke-width:.8}
.fib{fill:none;stroke:#7a7ac4;stroke-width:.9}
.level{fill:none;stroke:#808080;stroke-width:.9}
.grn{fill:none;stroke:#7fa67f;stroke-width:.7}
.vline-o{stroke:#b5b57f;stroke-width:.9}
.vline{stroke:#555;stroke-width:.9}
.wick{fill:none;stroke:#6a6a6a;stroke-width:.8}
.body-w{fill:#fff;stroke:#6a6a6a;stroke-width:.7}
.body-b{fill:#000}
.doji{fill:none;stroke:#222;stroke-width:.9}
.tenkan{fill:none;stroke:#bc8496;stroke-width:.7}
.kijun{fill:none;stroke:#7474c0;stroke-width:.8}
.chikou{fill:none;stroke:#111;stroke-width:1}
.fibtxt text{font-size:10px;fill:#3a30c4}
.fibsm text{font-size:5px;fill:#3a3ac8}
.fromtxt{font-size:5px;fill:#4a8a4a}
.cursor{fill:#fff;stroke:#999;stroke-width:.7}
.axis{stroke:#c8c8c8;stroke-width:1}
.tick{stroke:#808080;stroke-width:.7;fill:none}
.ax{font-size:5.300px;fill:#555}
.tag-t{fill:#222}
.tag-w{fill:#fff}
.tag-grey{fill:#ccc;stroke:#444;stroke-width:.8}
.tag-green{fill:#1fe01f}
.tag-white{fill:#fff;stroke:#666;stroke-width:.7}
.lite{stroke:#ccc}
.tag-navy{fill:#0a1a8a}
.tag-teal{fill:#0e7a70}
.tag-red{fill:#d9202c}
.xy{font-size:4px}
.lock-box{fill:#fff;stroke:#f0f0f0}
.lock{fill:#777;fill-rule:evenodd}

.sep{fill:none;stroke:#dedede;stroke-width:1}
.plabel{font-size:5.300px;fill:#555}
.ob{stroke:#8a8a8a;stroke-width:1.800;fill:none}
.l-green{stroke:#9cbb8c;stroke-width:.9;fill:none}
.l-blue{stroke:#7c7cb8;stroke-width:.9;fill:none}
.osc{fill:none;stroke:#55556e;stroke-width:.75}
.c-teal{fill:none;stroke:#7fb8ae;stroke-width:.8}
.c-red{fill:none;stroke:#cf7f88;stroke-width:.8}
.band-red{fill:#fcdcdc;stroke:#e6a8a8;stroke-width:.6}
.band-blue{fill:#dcdcfa}
.band-line{stroke:#a9a9e0;stroke-width:.8;fill:none}
.dtick{stroke:#e4e4e4;stroke-width:1;fill:none}
.dax text{font-size:5.200px;fill:#555;text-anchor:middle}

/* popup */
.popup{position:absolute;left:504px;top:109px;width:97px;height:196px;background:#fff;border:1px solid #ececec;box-shadow:0 0 1px #ddd;padding:0 0 0 2.500px;font-size:4.900px;line-height:7.500px;color:#555;white-space:nowrap}
.popup hr{border:0;border-top:1px solid #e8e8e8;margin:1.500px 3px 2px 0}
.pop-h{font-weight:700;color:#333}
.pop-in{padding:0 0 0 2px}
.pop-gap{margin-top:2.800px}
.popup .pop-in + .pop-gap{margin-top:4.500px}
.pop-gap2{margin-top:7.500px}

/* taskbar */
.taskbar{height:20px;flex:none;margin-top:auto;background:#1c1c1c;display:flex;align-items:stretch;color:#ddd}
.start{width:24px;display:flex;align-items:center;justify-content:center}
.start svg{width:10px;height:10px}
.search{width:171px;background:#3a3a3a;display:flex;align-items:center;padding-left:9px;font-size:7.200px;color:#ccc}
.search svg{width:10px;height:10px;margin-right:5px}
.apps{display:flex;padding-left:.5px}
.app-i{width:24.500px;display:flex;align-items:center;justify-content:center;position:relative}
.app-i svg{width:13px;height:13px}
.app-run::after{content:"";position:absolute;left:3px;right:3px;bottom:0;height:1px;background:#bbb}
.app-active{background:#3c3c3c}
.tray{flex:1;display:flex;align-items:center;padding-left:488px;position:relative}
.moon{width:11px;height:11px;margin-right:5px}
.wx{font-size:7px;color:#ddd;white-space:nowrap;width:17px}
.wx2{width:22px;padding-left:2px}
.tr{width:9px;height:9px;margin-left:3px;flex:none}
.clock{display:flex;flex-direction:column;align-items:center;width:36px;margin-left:3px;font-size:6px;line-height:9px;color:#eee}
.note{margin-left:7px;width:10px;height:10px}
```
